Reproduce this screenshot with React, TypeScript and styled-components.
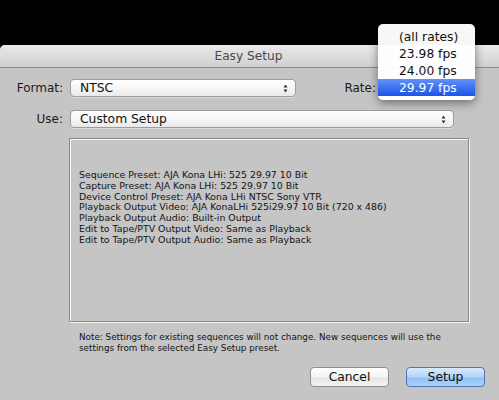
import { createGlobalStyle, styled } from 'styled-components';

const GlobalStyle = createGlobalStyle`
  html, body {
    margin: 0;
    padding: 0;
    background: #000;
  }
  body {
    font-family: 'DejaVu Sans', 'Liberation Sans', sans-serif;
  }
`;

const Screen = styled.div`
  position: relative;
  width: 499px;
  height: 400px;
  overflow: hidden;
  background: #000;
  padding-top: 45px;
  box-sizing: border-box;
`;

const Dialog = styled.div`
  width: 520px;
  height: 355px;
  background: #c5c5c5;
  border-radius: 5px 5px 0 0;
  display: flex;
  flex-direction: column;
`;

const TitleBar = styled.div`
  height: 22px;
  border-radius: 5px 5px 0 0;
  background: linear-gradient(#e9e9e9, #d0d0d0);
  border-bottom: 1px solid #8d8d8d;
  display: flex;
  align-items: center;
  justify-content: center;
  padding-right: 23px;
  font-size: 12.2px;
  color: #4a4a4a;
`;

const Body = styled.div`
  display: flex;
  flex-direction: column;
  padding: 11px 0 0 0;
`;

const FieldRow = styled.div<{ $gap?: number }>`
  display: flex;
  align-items: center;
  height: 18px;
  margin-bottom: ${(p) => p.$gap ?? 0}px;
`;

const Label = styled.div<{ $width?: number }>`
  width: ${(p) => p.$width ?? 63}px;
  text-align: right;
  font-size: 12px;
  color: #1a1a1a;
  margin-right: 7px;
`;

const SelectBox = styled.div<{ $width: number }>`
  position: relative;
  box-sizing: border-box;
  width: ${(p) => p.$width}px;
  height: 18px;
  border: 1px solid #9c9c9c;
  border-radius: 4px;
  background: linear-gradient(#ffffff 0%, #f7f7f7 50%, #e9e9e9 100%);
  box-shadow: 0 1px 0 rgba(255, 255, 255, 0.4);
  display: flex;
  align-items: center;
  padding-left: 9px;
  font-size: 12.3px;
  color: #111;
`;

const Arrows = styled.svg`
  position: absolute;
  right: 7px;
  top: 4px;
`;

const InfoBox = styled.div`
  box-sizing: border-box;
  width: 400px;
  height: 184px;
  margin-left: 69px;
  border: 1px solid #8a8a8a;
  box-shadow: inset 1px 1px 0 #f4f4f4, 1px 1px 0 #f4f4f4;
  padding: 31px 0 0 9px;
  font-size: 9.4px;
  line-height: 10.8px;
  color: #141414;
`;

const Note = styled.div`
  margin: 10px 0 0 79px;
  width: 368px;
  font-size: 8.8px;
  line-height: 11px;
  color: #141414;
`;

const ButtonRow = styled.div`
  display: flex;
  gap: 17px;
  margin: 13px 0 0 310px;
`;

const Button = styled.button<{ $primary?: boolean }>`
  box-sizing: border-box;
  width: 79px;
  height: 20px;
  border-radius: 4px;
  border: 1px solid ${(p) => (p.$primary ? '#5473b4' : '#8f8f8f')};
  background: ${(p) =>
    p.$primary
      ? 'linear-gradient(#d9ebfd 0%, #b3d4f8 50%, #92c2f4 55%, #a9d2fb 100%)'
      : 'linear-gradient(#ffffff 0%, #f4f4f4 50%, #e6e6e6 55%, #f3f3f3 100%)'};
  font-family: inherit;
  font-size: 12.3px;
  color: #111;
  padding: 0;
`;

const Menu = styled.div`
  position: absolute;
  left: 378px;
  top: 24px;
  width: 97px;
  padding: 4px 0;
  background: rgba(255, 255, 255, 0.97);
  border-radius: 5px;
  box-shadow: 0 3px 10px rgba(0, 0, 0, 0.45);
`;

const MenuItem = styled.div<{ $selected?: boolean }>`
  height: 17px;
  display: flex;
  align-items: center;
  padding-left: 21px;
  font-size: 12.3px;
  color: ${(p) => (p.$selected ? '#fff' : '#111')};
  background: ${(p) => (p.$selected ? 'linear-gradient(#6490f6, #1b55ea)' : 'transparent')};
`;

const SelectArrows = () => (
  <Arrows width="5" height="9" viewBox="0 0 5 9">
    <path d="M2.5 0.5 L4.5 3.5 L0.5 3.5 Z" fill="#333" />
    <path d="M2.5 8.5 L4.5 5.5 L0.5 5.5 Z" fill="#333" />
  </Arrows>
);

const infoLines = [
  'Sequence Preset: AJA Kona LHi: 525 29.97 10 Bit',
  'Capture Preset: AJA Kona LHi: 525 29.97 10 Bit',
  'Device Control Preset: AJA Kona LHi NTSC Sony VTR',
  'Playback Output Video: AJA KonaLHi 525i29.97 10 Bit (720 x 486)',
  'Playback Output Audio: Built-in Output',
  'Edit to Tape/PTV Output Video: Same as Playback',
  'Edit to Tape/PTV Output Audio: Same as Playback',
];

const rates = ['(all rates)', '23.98 fps', '24.00 fps', '29.97 fps'];

export default function App() {
  return (
    <Screen>
      <GlobalStyle />
      <Dialog>
        <TitleBar>Easy Setup</TitleBar>
        <Body>
          <FieldRow $gap={13}>
            <Label>Format:</Label>
            <SelectBox $width={226}>
              NTSC
              <SelectArrows />
            </SelectBox>
            <Label $width={80}>Rate:</Label>
          </FieldRow>
          <FieldRow $gap={10}>
            <Label>Use:</Label>
            <SelectBox $width={384}>
              Custom Setup
              <SelectArrows />
            </SelectBox>
          </FieldRow>
          <InfoBox>
            {infoLines.map((line) => (
              <div key={line}>{line}</div>
            ))}
          </InfoBox>
          <Note>
            Note: Settings for existing sequences will not change. New sequences will use the
            settings from the selected Easy Setup preset.
          </Note>
          <ButtonRow>
            <Button>Cancel</Button>
            <Button $primary>Setup</Button>
          </ButtonRow>
        </Body>
      </Dialog>
      <Menu>
        {rates.map((r) => (
          <MenuItem key={r} $selected={r === '29.97 fps'}>
            {r}
          </MenuItem>
        ))}
      </Menu>
    </Screen>
  );
}
